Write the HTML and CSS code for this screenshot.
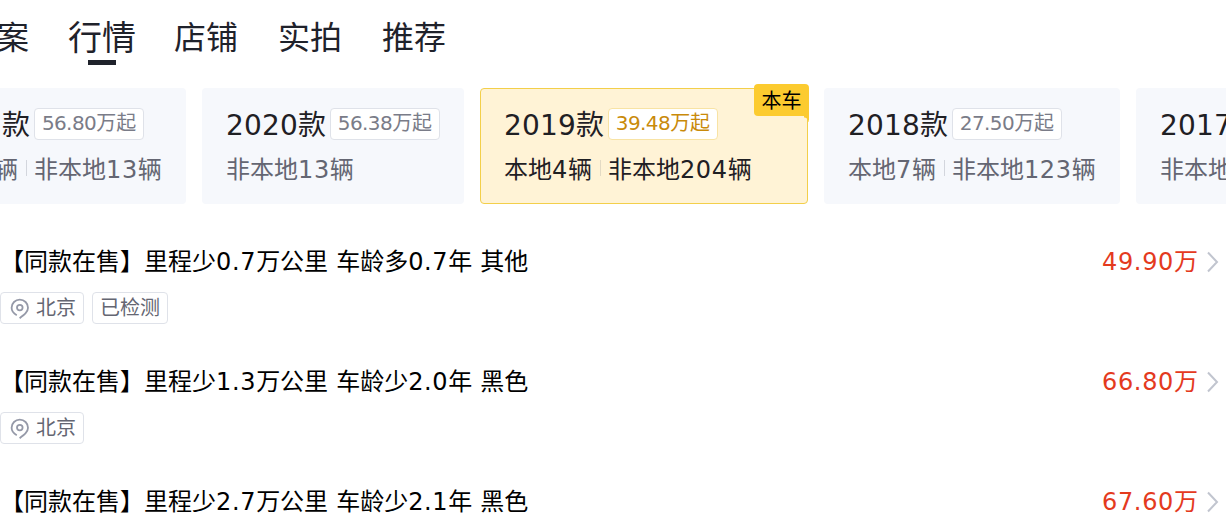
FILE: index.html
```html
<!DOCTYPE html>
<html lang="zh-CN">
<head>
  <meta charset="UTF-8">
  <meta name="viewport" content="width=device-width, initial-scale=1.0">
  <title>行情</title>
  <link rel="stylesheet" href="styles.css">
</head>
<body>

<svg class="symbols">
  <symbol id="pin" viewBox="0 0 20 22">
    <path d="M6.8 17.2 C3.5 15.4 1.6 12.8 1.6 9.8 A8.2 8.2 0 0 1 18 9.8 C18 14 14.5 16.6 9.6 20.2" />
    <circle cx="9.8" cy="9.6" r="2.8" />
  </symbol>
  <symbol id="arrow" viewBox="0 0 12 22">
    <path d="M1 1.5 L10 11 L1 20.5" />
  </symbol>
</svg>

<nav class="tabs">
  <a class="tab">案</a>
  <a class="tab active">行情</a>
  <a class="tab">店铺</a>
  <a class="tab">实拍</a>
  <a class="tab">推荐</a>
</nav>

<div class="years">
  <div class="year year-first">
    <div class="year-top"><span class="name">款</span><span class="from"><em>56.80</em>万起</span></div>
    <div class="count"><span>辆</span><i></i><span>非本地<em>13</em>辆</span></div>
  </div>
  <div class="year year-2020">
    <div class="year-top"><span class="name"><em>2020</em>款</span><span class="from"><em>56.38</em>万起</span></div>
    <div class="count"><span>非本地<em>13</em>辆</span></div>
  </div>
  <div class="year year-2019 current">
    <b class="badge">本车</b>
    <div class="year-top"><span class="name"><em>2019</em>款</span><span class="from"><em>39.48</em>万起</span></div>
    <div class="count"><span>本地<em>4</em>辆</span><i></i><span>非本地<em>204</em>辆</span></div>
  </div>
  <div class="year year-2018">
    <div class="year-top"><span class="name"><em>2018</em>款</span><span class="from"><em>27.50</em>万起</span></div>
    <div class="count"><span>本地<em>7</em>辆</span><i></i><span>非本地<em>123</em>辆</span></div>
  </div>
  <div class="year year-last">
    <div class="year-top"><span class="name"><em>2017</em></span></div>
    <div class="count"><span>非本地</span></div>
  </div>
</div>

<ul class="cars">
  <li class="car">
    <div class="car-top">
      <span class="title">【同款在售】里程少<em>0.7</em>万公里 车龄多<em>0.7</em>年 其他</span>
      <span class="price"><em>49.90</em>万</span>
      <svg class="arrow"><use href="#arrow" /></svg>
    </div>
    <div class="tags">
      <span class="tag"><svg class="pin"><use href="#pin" /></svg>北京</span>
      <span class="tag">已检测</span>
    </div>
  </li>
  <li class="car">
    <div class="car-top">
      <span class="title">【同款在售】里程少<em>1.3</em>万公里 车龄少<em>2.0</em>年 黑色</span>
      <span class="price"><em>66.80</em>万</span>
      <svg class="arrow"><use href="#arrow" /></svg>
    </div>
    <div class="tags">
      <span class="tag"><svg class="pin"><use href="#pin" /></svg>北京</span>
    </div>
  </li>
  <li class="car">
    <div class="car-top">
      <span class="title">【同款在售】里程少<em>2.7</em>万公里 车龄少<em>2.1</em>年 黑色</span>
      <span class="price"><em>67.60</em>万</span>
      <svg class="arrow"><use href="#arrow" /></svg>
    </div>
  </li>
</ul>

</body>
</html>
```
FILE: styles.css
```css
* { box-sizing: border-box; }
body {
  margin: 0;
  background: #fff;
  color: #000;
  font-family: "DejaVu Sans", "Noto Sans CJK SC", sans-serif;
  overflow: hidden;
}
em {
  font-style: normal;
  letter-spacing: 0.65px;
}
.symbols {
  display: none;
}
.tabs {
  display: flex;
  gap: 40px;
  height: 88px;
  margin-left: -3px;
  padding-top: 14px;
}
.tab {
  position: relative;
  font-size: 32px;
  line-height: 48px;
  color: #1f222b;
}
.tab.active {
  font-size: 34px;
  margin: 0 -2px 0 -1px;
}
.tab.active::after {
  content: '';
  position: absolute;
  left: 20px;
  top: 46px;
  width: 28px;
  height: 5px;
  background: #1f222b;
}
.years {
  display: flex;
  gap: 16px;
}
.year {
  position: relative;
  flex: none;
  height: 116px;
  padding: 20px 24px 0;
  background: #f6f8fc;
  border-radius: 4px;
  white-space: nowrap;
}
.year-first {
  width: 186px;
  padding-left: 2px;
  border-radius: 0 4px 4px 0;
}
.year-first .count {
  margin-left: -8px;
}
.year-2020 { width: 262px; }
.year-2019 { width: 328px; }
.year-2018 { width: 296px; }
.year-last { width: 140px; }
.year-top {
  display: flex;
  gap: 4px;
  height: 32px;
}
.name {
  font-size: 28px;
  line-height: 35px;
  color: #1f2024;
}
.name em {
  letter-spacing: 0.18px;
}
.from {
  width: 110px;
  height: 32px;
  border: 1px solid #dfe2e9;
  border-radius: 4px;
  background: #fff;
  color: #7a7c88;
  font-size: 20px;
  line-height: 29px;
  text-align: center;
}
.from em {
  letter-spacing: -0.6px;
}
.count {
  display: flex;
  align-items: center;
  height: 32px;
  margin-top: 14px;
  font-size: 24px;
  line-height: 32px;
  color: #646672;
}
.count i {
  width: 1px;
  height: 16px;
  margin: -4px 7px 0 8px;
  background: #d3d6dd;
}
.current {
  padding: 19px 23px 0;
  background: #fff3d6;
  border: 1px solid #f3cf4a;
}
.current .from {
  color: #c98a0a;
  border-color: #f8e3a4;
}
.current .count {
  color: #1f2024;
}
.current .count i {
  background: #e3dac4;
}
.badge {
  position: absolute;
  top: -5px;
  right: -2px;
  width: 55px;
  height: 32px;
  border-radius: 4px 4px 0 4px;
  background: #fccb2f;
  font-size: 20px;
  font-weight: 400;
  line-height: 34px;
  text-align: center;
}
/* small fold under the badge */
.badge::after {
  content: '';
  position: absolute;
  top: 32px;
  right: 0;
  width: 5px;
  height: 6px;
  background: radial-gradient(circle at 0 100%, transparent 4px, #fccb2f 5px);
}
.cars {
  height: 314px;
  margin: 0;
  padding: 40px 0 0;
  list-style: none;
  overflow: hidden;
}
.car {
  height: 120px;
}
.car:last-child {
  height: 36px;
}
.car-top {
  display: flex;
  align-items: center;
  height: 36px;
  font-size: 24px;
  line-height: 36px;
}
.title {
  flex: 1;
  word-spacing: 0.4px;
}
.price {
  color: #e43a1e;
}
.arrow {
  width: 12px;
  height: 22px;
  margin: 0 7px 0 9px;
  fill: none;
  stroke: #c1c5cf;
  stroke-width: 2;
}
.tags {
  display: flex;
  gap: 8px;
  margin-top: 12px;
}
.tag {
  display: flex;
  align-items: center;
  height: 32px;
  padding: 0 7px;
  border: 1px solid #dfe2e9;
  border-radius: 4px;
  color: #646672;
  font-size: 20px;
  line-height: 30px;
}
.pin {
  width: 20px;
  height: 22px;
  margin: 2px 6px 0 2px;
  fill: none;
  stroke: #9599a8;
  stroke-width: 1.8;
}
```
